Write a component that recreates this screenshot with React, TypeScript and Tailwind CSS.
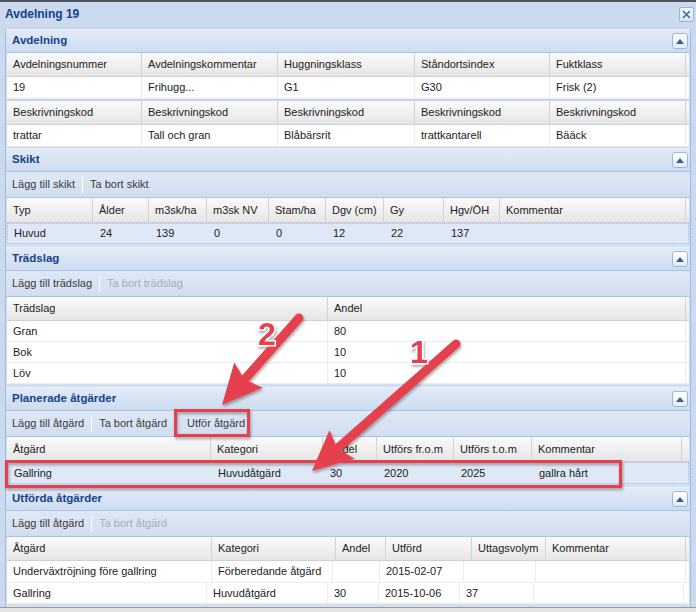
import React from 'react';

type Col = { w: string; label: string; right?: boolean };

const RED = '#e5404d';

function CollapseBtn() {
  return (
    <div className="w-[16px] h-[16px] rounded-[3px] border border-[#9cb7dc] bg-gradient-to-b from-[#ffffff] to-[#e3ebf6] flex items-center justify-center">
      <svg width="8" height="5" viewBox="0 0 8 5">
        <path d="M0 5 L4 0 L8 5 Z" fill="#3b5a94" />
      </svg>
    </div>
  );
}

function SectionHeader({ title }: { title: string }) {
  return (
    <div className="h-[24px] flex items-center justify-between pl-[6px] pr-[2px] bg-gradient-to-b from-[#e2ebf7] to-[#cddcf0] border-b border-[#a9c3e6] border-t border-t-[#edf2fa]">
      <span className="text-[11.5px] font-bold text-[#15428b]">{title}</span>
      <CollapseBtn />
    </div>
  );
}

function Toolbar({ items }: { items: { label: string; disabled?: boolean; sepAfter?: boolean }[] }) {
  return (
    <div className="h-[26px] flex items-center pl-[1px] bg-gradient-to-b from-[#dfe8f5] to-[#d1def0] border-b border-[#a9c3e6]">
      {items.map((it, i) => (
        <React.Fragment key={i}>
          <span className={`px-[5px] text-[11px] ${it.disabled ? 'text-[#a3aebd]' : 'text-[#3a3a3a]'}`}>{it.label}</span>
          {it.sepAfter && <span className="mx-[2px] w-px h-[16px] bg-[#a9bfdc] border-r border-white" />}
        </React.Fragment>
      ))}
    </div>
  );
}

function HeaderRow({ cols, h = 'h-[25px]' }: { cols: Col[]; h?: string }) {
  return (
    <div className={`${h} flex bg-gradient-to-b from-[#fafafa] to-[#e6e6e6] border-b border-[#d0d0d0]`}>
      {cols.map((c, i) => (
        <div
          key={i}
          className={`${c.w} shrink-0 flex items-center px-[6px] border-r border-[#d3d3d3] text-[11px] text-[#222222] whitespace-nowrap overflow-hidden ${c.right ? 'justify-end' : ''}`}
        >
          {c.label}
        </div>
      ))}
      <div className="flex-1" />
    </div>
  );
}

function DataRow({ cols, h = 'h-[21px]', selected }: { cols: Col[]; h?: string; selected?: boolean }) {
  return (
    <div
      className={`${h} flex text-[11px] text-[#222222] ${
        selected ? 'bg-[#dfe8f6] border border-dotted border-[#a3bae9]' : 'bg-white border-b border-[#ededed]'
      }`}
    >
      {cols.map((c, i) => (
        <div
          key={i}
          className={`${c.w} shrink-0 flex items-center px-[6px] whitespace-nowrap overflow-hidden ${
            selected ? '' : 'border-r border-[#ededed]'
          }`}
        >
          {c.label}
        </div>
      ))}
      <div className="flex-1" />
    </div>
  );
}

const avdW = ['w-[135px]', 'w-[136px]', 'w-[137px]', 'w-[135px]', 'w-[136px]'];
const mk = (ws: string[], labels: string[]): Col[] => ws.map((w, i) => ({ w, label: labels[i] ?? '' }));

const skiktW = ['w-[86px]', 'w-[56px]', 'w-[58px]', 'w-[62px]', 'w-[57px]', 'w-[58px]', 'w-[60px]', 'w-[56px]', 'w-[186px]'];
const tradW = ['w-[321px]', 'w-[358px]'];
const planW = ['w-[204px]', 'w-[112px]', 'w-[54px]', 'w-[77px]', 'w-[78px]', 'w-[150px]'];
const utfHeadW = ['w-[205px]', 'w-[124px]', 'w-[50px]', 'w-[86px]', 'w-[74px]', 'w-[140px]'];
const utfRow1W = ['w-[205px]', 'w-[121px]', 'w-[47px]', 'w-[84px]', 'w-[72px]', 'w-[150px]'];
const utfRow2W = ['w-[200px]', 'w-[121px]', 'w-[51px]', 'w-[81px]', 'w-[74px]', 'w-[150px]'];

function arrow(sx: number, sy: number, tx: number, ty: number) {
  const dx = tx - sx;
  const dy = ty - sy;
  const len = Math.hypot(dx, dy);
  const ux = dx / len;
  const uy = dy / len;
  const px = -uy;
  const py = ux;
  const headL = 40;
  const headW = 19;
  const bx = tx - ux * headL;
  const by = ty - uy * headL;
  return {
    shaft: { x1: sx, y1: sy, x2: bx + ux * 4, y2: by + uy * 4 },
    head: `${tx},${ty} ${bx + px * headW},${by + py * headW} ${bx + ux * 6},${by + uy * 6} ${bx - px * headW},${by - py * headW}`,
  };
}

function Annotations() {
  const a1 = arrow(456, 344, 312, 471);
  const a2 = arrow(299, 318, 222, 405);
  return (
    <svg className="absolute inset-0 pointer-events-none" width="696" height="612" viewBox="0 0 696 612">
      <defs>
        <filter id="sh" x="-20%" y="-20%" width="140%" height="140%">
          <feDropShadow dx="1" dy="2" stdDeviation="1.5" floodColor="#000" floodOpacity="0.35" />
        </filter>
      </defs>
      <g filter="url(#sh)">
        <rect x="175.5" y="410.5" width="73" height="25" fill="none" stroke={RED} strokeWidth="3" />
        <rect x="6.5" y="461.5" width="614" height="25" fill="none" stroke={RED} strokeWidth="3" />
        {[a1, a2].map((a, i) => (
          <g key={i}>
            <line {...a.shaft} stroke={RED} strokeWidth="9" strokeLinecap="round" />
            <polygon points={a.head} fill={RED} />
          </g>
        ))}
        <text
          x="267"
          y="345"
          textAnchor="middle"
          fontFamily="Liberation Sans, Arial, sans-serif"
          fontWeight="bold"
          fontSize="32"
          fill={RED}
          stroke="#ffffff"
          strokeWidth="3"
          paintOrder="stroke"
        >
          2
        </text>
        <text
          x="419"
          y="363"
          textAnchor="middle"
          fontFamily="Liberation Sans, Arial, sans-serif"
          fontWeight="bold"
          fontSize="32"
          fill={RED}
          stroke="#ffffff"
          strokeWidth="3"
          paintOrder="stroke"
        >
          1
        </text>
      </g>
    </svg>
  );
}

export default function App() {
  return (
    <div className="relative w-[696px] h-[612px] overflow-hidden bg-[#cbdaee] font-['Liberation_Sans',Arial,sans-serif]">
      <div className="h-[2px] bg-[#50565e]" />
      <div className="h-[24px] flex items-center justify-between pl-[5px] pr-[2px]">
        <span className="text-[12px] font-bold text-[#15428b]">Avdelning 19</span>
        <div className="w-[15px] h-[15px] rounded-[2px] border border-[#99b3d6] bg-gradient-to-b from-[#f4f8fc] to-[#dce6f3] flex items-center justify-center">
          <svg width="9" height="9" viewBox="0 0 9 9">
            <path d="M1 1 L8 8 M8 1 L1 8" stroke="#4a6796" strokeWidth="1.6" />
          </svg>
        </div>
      </div>

      <div className="mt-[3px] ml-[5px] w-[686px] border-x border-[#99bbe8] bg-[#d3e0f1]">
        {/* Avdelning */}
        <SectionHeader title="Avdelning" />
        <div className="px-[1px]">
          <HeaderRow h="h-[24px]" cols={mk(avdW, ['Avdelningsnummer', 'Avdelningskommentar', 'Huggningsklass', 'Ståndortsindex', 'Fuktklass'])} />
          <DataRow h="h-[22px]" cols={mk(avdW, ['19', 'Frihugg...', 'G1', 'G30', 'Frisk (2)'])} />
          <div className="h-[2px] bg-[#c3d5ee]" />
          <HeaderRow h="h-[24px]" cols={mk(avdW, ['Beskrivningskod', 'Beskrivningskod', 'Beskrivningskod', 'Beskrivningskod', 'Beskrivningskod'])} />
          <DataRow h="h-[22px]" cols={mk(avdW, ['trattar', 'Tall och gran', 'Blåbärsrit', 'trattkantarell', 'Bääck'])} />
          <div className="h-[1px] bg-[#c3d5ee]" />
        </div>

        {/* Skikt */}
        <SectionHeader title="Skikt" />
        <Toolbar items={[{ label: 'Lägg till skikt', sepAfter: true }, { label: 'Ta bort skikt' }]} />
        <div className="px-[1px] pb-[3px]">
          <HeaderRow cols={mk(skiktW, ['Typ', 'Ålder', 'm3sk/ha', 'm3sk NV', 'Stam/ha', 'Dgv (cm)', 'Gy', 'Hgv/ÖH', 'Kommentar'])} />
          <DataRow selected cols={mk(skiktW, ['Huvud', '24', '139', '0', '0', '12', '22', '137', ''])} />
        </div>

        {/* Trädslag */}
        <SectionHeader title="Trädslag" />
        <Toolbar items={[{ label: 'Lägg till trädslag', sepAfter: true }, { label: 'Ta bort trädslag', disabled: true }]} />
        <div className="px-[1px] pb-[3px]">
          <HeaderRow h="h-[24px]" cols={mk(tradW, ['Trädslag', 'Andel'])} />
          <DataRow cols={mk(tradW, ['Gran', '80'])} />
          <DataRow cols={mk(tradW, ['Bok', '10'])} />
          <DataRow cols={mk(tradW, ['Löv', '10'])} />
        </div>

        {/* Planerade åtgärder */}
        <SectionHeader title="Planerade åtgärder" />
        <Toolbar
          items={[
            { label: 'Lägg till åtgärd', sepAfter: true },
            { label: 'Ta bort åtgärd' },
            { label: '' },
            { label: 'Utför åtgärd' },
          ]}
        />
        <div className="px-[1px] pb-[3px]">
          <HeaderRow cols={mk(planW, ['Åtgärd', 'Kategori', 'Andel', 'Utförs fr.o.m', 'Utförs t.o.m', 'Kommentar'])} />
          <DataRow selected h="h-[22px]" cols={mk(planW, ['Gallring', 'Huvudåtgärd', '30', '2020', '2025', 'gallra hårt'])} />
        </div>

        {/* Utförda åtgärder */}
        <SectionHeader title="Utförda åtgärder" />
        <Toolbar items={[{ label: 'Lägg till åtgärd', sepAfter: true }, { label: 'Ta bort åtgärd', disabled: true }]} />
        <div className="px-[1px] pb-[3px]">
          <HeaderRow
            h="h-[24px]"
            cols={mk(utfHeadW, ['Åtgärd', 'Kategori', 'Andel', 'Utförd', 'Uttagsvolym', 'Kommentar'])}
          />
          <DataRow h="h-[22px]" cols={mk(utfRow1W, ['Underväxtröjning före gallring', 'Förberedande åtgärd', '', '2015-02-07', '', ''])} />
          <DataRow cols={mk(utfRow2W, ['Gallring', 'Huvudåtgärd', '30', '2015-10-06', '37', ''])} />
        </div>
      </div>
      <div className="h-[8px] bg-[#e4e4e4] border-t border-[#9a9a9a]" />

      <Annotations />
    </div>
  );
}
